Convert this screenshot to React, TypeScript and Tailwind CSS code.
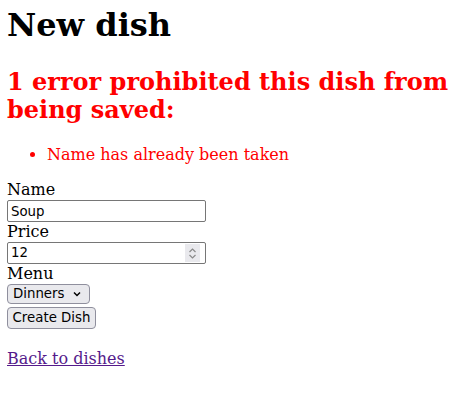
import React from 'react';

const sans = { fontFamily: '"DejaVu Sans", sans-serif' };

export default function App() {
  return (
    <div className="min-h-screen bg-white px-[7px] pt-[7px] text-black" style={{ fontFamily: '"DejaVu Serif", serif' }}>
      <h1 className="text-[32px] font-bold leading-[37px]">New dish</h1>

      {/* Error explanation */}
      <div className="text-[#ff0000]">
        <h2 className="mt-[24px] text-[24px] font-bold leading-[28px]">
          1 error prohibited this dish from being saved:
        </h2>
        <ul className="mt-[21px] list-disc pl-10 text-base leading-[19px]">
          <li>Name has already been taken</li>
        </ul>
      </div>

      <form className="mt-4 flex flex-col items-start text-base" onSubmit={(e) => e.preventDefault()}>
        <label htmlFor="dish_name" className="leading-[20px]">Name</label>
        <input
          id="dish_name"
          type="text"
          defaultValue="Soup"
          className="h-[22px] w-[199px] rounded-[2px] border border-[#767676] px-[3px] text-[13.33px] leading-[20px] outline-none"
          style={sans}
        />

        <label htmlFor="dish_price" className="leading-[20px]">Price</label>
        <div className="flex h-[22px] w-[199px] items-center rounded-[2px] border border-[#767676] pl-[3px] pr-[5px]" style={sans}>
          <span className="flex-1 text-[13.33px]">12</span>
          <span className="flex h-[18px] w-[15px] items-center justify-center bg-[#e9e9ed]">
            <svg width="9" height="13" viewBox="0 0 9 13" fill="none" stroke="#8a8a8a" strokeWidth="1.2">
              <path d="M1.5 5 4.5 2 7.5 5" />
              <path d="M1.5 8 4.5 11 7.5 8" />
            </svg>
          </span>
        </div>

        <label htmlFor="dish_menu" className="leading-[20px]">Menu</label>
        <div
          className="flex h-[20px] w-[83px] items-center justify-between rounded-[4px] border border-[#8f8f9d] bg-[#e9e9ed] pl-[5px] pr-[8px] text-[13.33px]"
          style={sans}
        >
          <span>Dinners</span>
          <svg width="8" height="6" viewBox="0 0 8 6" fill="none" stroke="#000" strokeWidth="1.5">
            <path d="M1 1.5 4 4.5 7 1.5" />
          </svg>
        </div>

        <button
          type="submit"
          className="mt-[3px] h-[22px] w-[89px] rounded-[4px] border border-[#8f8f9d] bg-[#e9e9ed] text-[13.33px]"
          style={sans}
        >
          Create Dish
        </button>
      </form>

      <div className="mt-[20px] leading-[19px]">
        <a href="#" className="text-[#551a8b] underline">Back to dishes</a>
      </div>
    </div>
  );
}
